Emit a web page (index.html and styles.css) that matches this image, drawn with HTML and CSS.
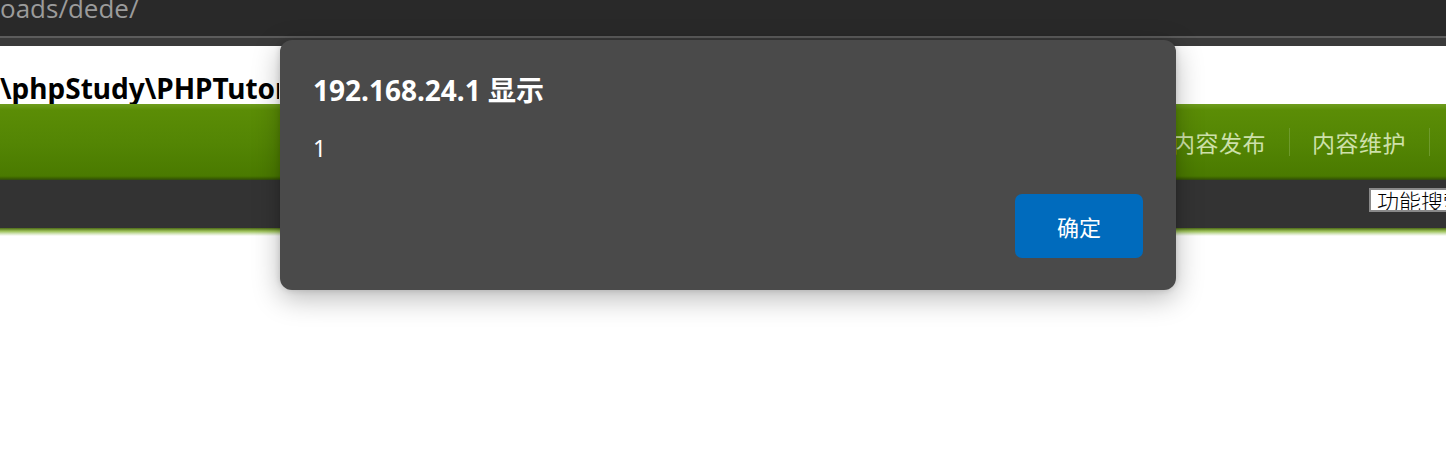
FILE: index.html
```html
<!DOCTYPE html>
<html>
<head>
<meta charset="utf-8">
<link rel="stylesheet" href="styles.css">
</head>
<body>
<div class="chrome">
  <div class="urlbar"><span class="url">oads/dede/</span></div>
  <div class="tabline"></div>
  <div class="strip"></div>
</div>
<div class="page">
  <div class="header"><span class="path">\phpStudy\PHPTutorial\WWW</span></div>
  <div class="nav">
    <div class="nav-items">
      <span class="nav-item">内容发布</span>
      <span class="sep"></span>
      <span class="nav-item">内容维护</span>
      <span class="sep"></span>
    </div>
  </div>
  <div class="subbar"><span class="search">功能搜索</span></div>
  <div class="glow"></div>
</div>
<div class="dialog">
  <div class="dlg-title">192.168.24.1 显示</div>
  <div class="dlg-msg">1</div>
  <div class="dlg-actions"><button class="ok">确定</button></div>
</div>
</body>
</html>
```
FILE: styles.css
```css
html, body {
  margin: 0;
  padding: 0;
  background: #ffffff;
  overflow: hidden;
  width: 1446px;
  height: 472px;
  font-family: "Noto Sans", "Noto Sans CJK SC", sans-serif;
}
.chrome {
  background: #292929;
}
.urlbar {
  height: 36px;
  overflow: hidden;
}
.url {
  display: block;
  margin-top: -10px;
  font-family: "Open Sans", "Noto Sans", sans-serif;
  font-size: 26px;
  line-height: 36px;
  color: #9b9b9b;
  white-space: nowrap;
}
.tabline {
  height: 2px;
  background: #5c5c5c;
}
.strip {
  height: 8px;
  background: #3a3a3a;
}
.header {
  height: 58px;
  background: #ffffff;
}
.path {
  display: block;
  width: 279px;
  overflow: hidden;
  white-space: nowrap;
  padding-top: 26px;
  font-family: "Noto Sans", sans-serif;
  font-weight: 700;
  font-size: 28px;
  line-height: 32px;
  color: #000;
}
.nav {
  height: 76px;
  background: linear-gradient(#6f9d1f 0px, #5b8d06 6px, #538504 40px, #4a7a00 72px, #3d6300 74px, #2f4a10 76px);
  display: flex;
  justify-content: flex-end;
  align-items: center;
}
.nav-items {
  display: flex;
  align-items: center;
  margin-right: 16px;
}
.nav-item {
  font-family: "Noto Sans CJK SC", sans-serif;
  font-size: 23px;
  letter-spacing: 0.5px;
  color: #cde0aa;
  padding: 0 23px 0 22px;
  line-height: 30px;
}
.sep {
  width: 1px;
  height: 28px;
  background: #6e9a2c;
}
.subbar {
  height: 48px;
  background: #333333;
  display: flex;
  justify-content: flex-end;
  align-items: flex-start;
}
.search {
  margin-top: 8px;
  margin-right: -2px;
  box-sizing: border-box;
  height: 24px;
  width: 79px;
  padding-left: 6px;
  background: #ffffff;
  border: 2px solid #8a8a8a;
  font-family: "Noto Sans CJK SC", serif;
  font-weight: 300;
  font-size: 22px;
  line-height: 20px;
  color: #000;
  white-space: nowrap;
  overflow: hidden;
}
.glow {
  height: 8px;
  background: linear-gradient(#4d6a18, #9cc157 40%, #d9e8c4 75%, #ffffff);
}
.dialog {
  position: absolute;
  left: 280px;
  top: 40px;
  width: 896px;
  height: 250px;
  box-sizing: border-box;
  background: #4a4a4a;
  border-radius: 12px;
  box-shadow: 0 8px 28px rgba(0, 0, 0, 0.28), 0 0 6px rgba(0, 0, 0, 0.15);
  padding: 34px 33px 0 33px;
  color: #ffffff;
}
.dlg-title {
  font-family: "Noto Sans", "Noto Sans CJK SC", sans-serif;
  font-weight: 700;
  font-size: 28px;
  line-height: 32px;
}
.dlg-msg {
  margin-top: 27px;
  font-family: "Noto Sans", sans-serif;
  font-size: 23px;
  line-height: 30px;
}
.dlg-actions {
  display: flex;
  justify-content: flex-end;
  margin-top: 31px;
}
.ok {
  width: 128px;
  height: 64px;
  border: none;
  border-radius: 7px;
  background: #006bbd;
  color: #ffffff;
  font-family: "Noto Sans CJK SC", sans-serif;
  font-size: 22px;
  padding: 0;
}
```
